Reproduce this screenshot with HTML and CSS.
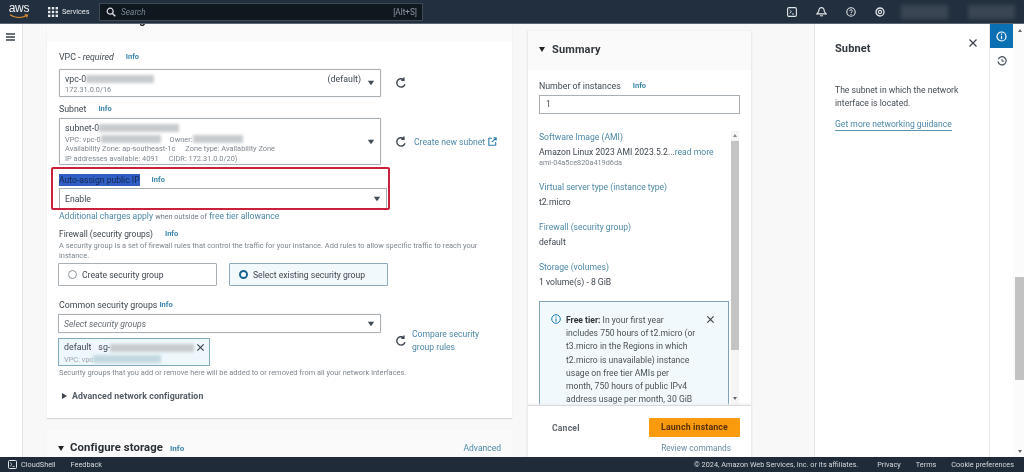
FILE: index.html
```html
<!DOCTYPE html>
<html lang="en">
<head>
<meta charset="utf-8">
<title>Launch an instance</title>
<link rel="stylesheet" href="styles.css">
</head>
<body>
<svg class="defs" width="0" height="0" aria-hidden="true">
  <symbol id="refresh" viewBox="0 0 12 12"><path d="M10 7.2A4.2 4.2 0 1 1 8.6 2.6M8.9 .6v2.6H6.3" fill="none" stroke="#3d4650" stroke-width="1.4"/></symbol>
  <symbol id="caret" viewBox="0 0 8 6"><path d="M.8 .8h6.4L4 5.2z" fill="#424c56"/></symbol>
  <symbol id="close" viewBox="0 0 10 10"><path d="M1.5 1.5l7 7M8.5 1.5l-7 7" fill="none" stroke="#3d4650" stroke-width="1.3"/></symbol>
</svg>
<div class="page">
  <header class="topbar">
    <div class="logo">
      <span class="logo-text">aws</span>
      <svg class="logo-smile" width="20" height="5" viewBox="0 0 20 5"><path d="M1 .8C6 4.4 13 4.4 18 1.2M15.6 .8l2.8 .1-.8 2.6" fill="none" stroke="#e8952c" stroke-width="1.1"/></svg>
    </div>
    <svg class="grid-icon" width="10" height="10" viewBox="0 0 10 10" fill="#e6e9ec"><rect width="2.4" height="2.4"/><rect x="3.8" width="2.4" height="2.4"/><rect x="7.6" width="2.4" height="2.4"/><rect y="3.8" width="2.4" height="2.4"/><rect x="3.8" y="3.8" width="2.4" height="2.4"/><rect x="7.6" y="3.8" width="2.4" height="2.4"/><rect y="7.6" width="2.4" height="2.4"/><rect x="3.8" y="7.6" width="2.4" height="2.4"/><rect x="7.6" y="7.6" width="2.4" height="2.4"/></svg>
    <span class="services">Services</span>
    <div class="searchbox">
      <svg width="10" height="10" viewBox="0 0 10 10"><circle cx="4.2" cy="4.2" r="3" fill="none" stroke="#dfe3e6" stroke-width="1.2"/><path d="M6.4 6.4L9.3 9.3" stroke="#dfe3e6" stroke-width="1.4"/></svg>
      <span class="search-ph">Search</span>
      <span class="search-key">[Alt+S]</span>
    </div>
    <div class="top-icons">
      <svg width="10" height="10" viewBox="0 0 10 10"><rect x=".6" y=".6" width="8.8" height="8.8" rx="1.4" fill="none" stroke="#e3e6e9" stroke-width="1.1"/><path d="M2.6 3l1.8 1.7-1.8 1.7M5 7h2" fill="none" stroke="#e3e6e9" stroke-width=".9"/></svg>
      <svg width="11" height="10" viewBox="0 0 11 10"><path d="M5.5 .6c-1.8 0-2.6 1.4-2.6 3 0 1.2-1 2-2 3.2h9.2c-1-1.2-2-2-2-3.2 0-1.6-.8-3-2.6-3z" fill="none" stroke="#e3e6e9" stroke-width="1.2"/><path d="M4 8.3h3v1H4z" fill="#e3e6e9"/></svg>
      <svg width="10" height="10" viewBox="0 0 10 10"><circle cx="5" cy="5" r="4.2" fill="none" stroke="#e3e6e9" stroke-width="1.1"/><path d="M3.7 3.9c0-1.6 2.7-1.6 2.7 0 0 1-1.4 1-1.4 2.1" fill="none" stroke="#e3e6e9" stroke-width=".9"/><circle cx="5" cy="7.4" r=".6" fill="#e3e6e9"/></svg>
      <svg width="10" height="10" viewBox="0 0 10 10"><circle cx="5" cy="5" r="4" fill="none" stroke="#e3e6e9" stroke-width="1.3"/><circle cx="5" cy="5" r="1.6" fill="none" stroke="#e3e6e9" stroke-width="1.1"/></svg>
    </div>
    <div class="account">
      <span class="acct-a"></span>
      <span class="acct-b"></span>
    </div>
  </header>

  <div class="workspace">
    <nav class="navrail">
      <svg width="9" height="8" viewBox="0 0 9 8"><path d="M0 1h9M0 4h9M0 7h9" stroke="#39434d" stroke-width="1.3"/></svg>
    </nav>

    <main class="form-col">
      <section class="card">
        <div class="card-head"><h2 class="clipped-title">Network settings</h2></div>
        <div class="card-body">
          <div class="label"><span>VPC - <i>required</i></span><a class="info info-vpc">Info</a></div>
          <div class="field-row field-vpc">
            <div class="select select-vpc">
              <div class="select-main">
                <div class="opt-line"><span>vpc-0</span><span class="smudge smudge-vpc"></span><span class="opt-tag">(default)</span></div>
                <div class="opt-sub">172.31.0.0/16</div>
              </div>
              <svg class="caret" width="8" height="6"><use href="#caret"/></svg>
            </div>
            <svg class="refresh" width="12" height="12"><use href="#refresh"/></svg>
          </div>

          <div class="label label-subnet"><span>Subnet</span><a class="info info-subnet">Info</a></div>
          <div class="field-row">
            <div class="select select-subnet">
              <div class="select-main">
                <div class="opt-line"><span>subnet-0</span><span class="smudge smudge-subnet"></span></div>
                <div class="opt-sub"><span>VPC: vpc-0</span><span class="smudge smudge-sv"></span><span class="owner">Owner:</span><span class="smudge smudge-owner"></span></div>
                <div class="opt-sub">Availability Zone: ap-southeast-1c<span class="gap-l">Zone type: Availability Zone</span></div>
                <div class="opt-sub">IP addresses available: 4091<span class="gap-l">CIDR: 172.31.0.0/20)</span></div>
              </div>
              <svg class="caret" width="8" height="6"><use href="#caret"/></svg>
            </div>
            <svg class="refresh" width="12" height="12"><use href="#refresh"/></svg>
            <a class="link create-link">Create new subnet</a>
            <svg class="ext" width="9" height="9" viewBox="0 0 9 9"><path d="M4 1.3H.8v6.9h6.9V5M3.8 5.2L8 1M5.4 .8h2.800v2.800" fill="none" stroke="#2f7fae" stroke-width="1.1"/></svg>
          </div>

          <div class="highlight">
            <div class="label label-auto"><span class="selected">Auto-assign public IP</span><a class="info info-auto">Info</a></div>
            <div class="select select-enable">
              <span>Enable</span>
              <svg class="caret" width="8" height="6"><use href="#caret"/></svg>
            </div>
          </div>

          <p class="charges"><a class="link">Additional charges apply</a> <small>when outside of</small> <a class="link">free tier allowance</a></p>

          <div class="label label-fw"><span>Firewall (security groups)</span><a class="info info-fw">Info</a></div>
          <p class="desc">A security group is a set of firewall rules that control the traffic for your instance. Add rules to allow specific traffic to reach your instance.</p>
          <div class="radios">
            <div class="radio-card"><span class="radio"></span>Create security group</div>
            <div class="radio-card radio-on"><span class="radio radio-dot"></span>Select existing security group</div>
          </div>

          <div class="label label-common"><span>Common security groups</span><a class="info info-common">Info</a></div>
          <div class="sg-row">
            <div class="sg-left">
              <div class="select select-sg"><i>Select security groups</i><svg class="caret" width="8" height="6"><use href="#caret"/></svg></div>
              <div class="token">
                <div class="token-main">
                  <div class="opt-line"><span>default</span><span class="token-id">sg-</span><span class="smudge smudge-sg"></span></div>
                  <div class="opt-sub token-sub"><span>VPC: vpc</span><span class="smudge smudge-tv"></span></div>
                </div>
                <svg class="token-x" width="9" height="9"><use href="#close"/></svg>
              </div>
            </div>
            <svg class="refresh" width="12" height="12"><use href="#refresh"/></svg>
            <a class="link compare-link">Compare security<br>group rules</a>
          </div>
          <p class="hint">Security groups that you add or remove here will be added to or removed from all your network interfaces.</p>
          <div class="advanced"><span class="tri-right"></span>Advanced network configuration</div>
        </div>
      </section>

      <section class="card card-storage">
        <h2 class="storage-title">Configure storage</h2>
        <a class="info info-storage">Info</a>
        <a class="link storage-adv">Advanced</a>
      </section>
    </main>

    <aside class="summary">
      <div class="summary-head"><span class="tri-down"></span><h2>Summary</h2></div>
      <div class="summary-top">
        <div class="label"><span>Number of instances</span><a class="info info-num">Info</a></div>
        <div class="num-input">1</div>
      </div>
      <div class="summary-scroll">
        <div class="summary-list">
          <a class="link sum-key">Software Image (AMI)</a>
          <div class="sum-val">Amazon Linux 2023 AMI 2023.5.2...<a class="link">read more</a></div>
          <div class="sum-sub">ami-04a5ce820a419d6da</div>
          <a class="link sum-key sum-gap">Virtual server type (instance type)</a>
          <div class="sum-val">t2.micro</div>
          <a class="link sum-key sum-gap">Firewall (security group)</a>
          <div class="sum-val">default</div>
          <a class="link sum-key sum-gap">Storage (volumes)</a>
          <div class="sum-val">1 volume(s) - 8 GiB</div>
          <div class="alert">
            <svg class="alert-icon" width="10" height="10" viewBox="0 0 10 10"><circle cx="5" cy="5" r="4.3" fill="none" stroke="#1c7eb0" stroke-width="1"/><path d="M5 4.4v3M5 2.4v1" stroke="#1c7eb0" stroke-width="1.1"/></svg>
            <p class="alert-text"><b>Free tier:</b> In your first year<br>includes 750 hours of t2.micro (or<br>t3.micro in the Regions in which<br>t2.micro is unavailable) instance<br>usage on free tier AMIs per<br>month, 750 hours of public IPv4<br>address usage per month, 30 GiB</p>
            <svg class="alert-x" width="9" height="9"><use href="#close"/></svg>
          </div>
        </div>
        <div class="mini-scroll"><span class="mini-up"></span><span class="mini-thumb"></span><span class="mini-down"></span></div>
      </div>
      <div class="summary-foot">
        <div class="foot-row"><a class="cancel">Cancel</a><a class="launch">Launch instance</a></div>
        <a class="link review">Review commands</a>
      </div>
    </aside>

    <aside class="help">
      <div class="help-head"><h2>Subnet</h2><svg width="10" height="10"><use href="#close"/></svg></div>
      <p class="help-text">The subnet in which the network interface is located.</p>
      <a class="help-link">Get more networking guidance</a>
    </aside>

    <div class="toolrail">
      <div class="tool-on"><svg width="11" height="11" viewBox="0 0 11 11"><circle cx="5.5" cy="5.5" r="4.5" fill="none" stroke="#fff" stroke-width="1.2"/><path d="M5.5 4.8v3.2M5.5 2.600v1.100" stroke="#fff" stroke-width="1.2"/></svg></div>
      <div class="tool-off"><svg width="10" height="10" viewBox="0 0 10 10"><path d="M1.2 3.4A4.1 4.1 0 1 1 1 5.4" fill="none" stroke="#4a545e" stroke-width="1.2"/><path d="M5 3v2.2h2.2" fill="none" stroke="#4a545e" stroke-width="1"/></svg></div>
    </div>

    <div class="pagescroll"><span class="ps-up"></span><span class="ps-thumb"></span><span class="ps-down"></span></div>
  </div>

  <footer class="footer">
    <svg width="9" height="9" viewBox="0 0 9 9"><rect x=".5" y=".5" width="8" height="8" rx="1" fill="none" stroke="#e3e6e9"/><path d="M2.2 2.6L4 4.4 2.2 6.2M4.500 6.500h2" fill="none" stroke="#e3e6e9" stroke-width=".8"/></svg>
    <span class="foot-cs">CloudShell</span>
    <span class="foot-fb">Feedback</span>
    <span class="foot-copy">© 2024, Amazon Web Services, Inc. or its affiliates.</span>
    <span class="foot-pr">Privacy</span>
    <span class="foot-te">Terms</span>
    <span class="foot-co">Cookie preferences</span>
  </footer>
</div>
</body>
</html>
```
FILE: styles.css
```css
* { box-sizing: border-box; }
html, body { margin: 0; padding: 0; }
body { width: 1024px; height: 472px; overflow: hidden; background: #fff; font-family: Roboto, "Liberation Sans", Arial, sans-serif; font-size: 8.6px; color: #3f4750; }
.defs { position: absolute; }
h2, p { margin: 0; }
.page { width: 1024px; height: 472px; display: flex; flex-direction: column; overflow: hidden; filter: blur(.35px); }

/* top bar */
.topbar { height: 24px; flex: none; display: flex; align-items: center; background: #222f3e; border-bottom: 1px solid #5a6673; color: #e6e9ec; }
.logo { width: 20px; margin-left: 9px; display: flex; flex-direction: column; align-items: center; height: 19px; }
.logo-text { font-family: "Liberation Sans", sans-serif; font-size: 12px; line-height: 12px; color: #f1f3f5; letter-spacing: -.2px; }
.grid-icon { margin-left: 19px; }
.services { margin-left: 4px; font-size: 7.3px; width: 37px; }
.searchbox { width: 324px; height: 18px; display: flex; align-items: center; background: #10181f; border: 1px solid #3f4a56; padding: 0 5px 0 6px; }
.search-ph { margin-left: 5px; font-style: italic; color: #7d8791; font-size: 8.3px; }
.search-key { margin-left: auto; color: #8d969f; font-size: 8.2px; }
.top-icons { margin-left: 364px; display: flex; gap: 19px; align-items: center; width: 99px; }
.account { margin-left: 15px; display: flex; gap: 20px; }
.acct-a, .acct-b { display: block; width: 47px; height: 14px; background: #3a4653; filter: blur(2px); }

/* main row */
.workspace { flex: 1; min-height: 0; display: flex; background: #f8f8f8; overflow: hidden; }
.navrail { width: 23px; flex: none; background: #fff; border-right: 1px solid #e4e4e4; padding: 9px 0 0 6px; }
.navrail svg { display: block; }
.form-col { width: 489px; flex: none; padding-left: 24px; }
.card { background: #fff; box-shadow: 0 1px 1px #d5d8da; }
.card-head { height: 18px; background: #fafafa; overflow: hidden; padding-left: 13px; }
.clipped-title { margin-top: -13px; font-size: 12px; line-height: 16px; font-weight: 700; color: #222; }
.card-body { padding: 9px 0 0 12px; height: 376px; }

.label { height: 12px; line-height: 12px; display: flex; font-size: 8.8px; color: #3f4750; }
.info { color: #3c86ab; font-weight: 700; font-size: 7.5px; }
.info-vpc { margin-left: 12px; }
.info-subnet { margin-left: 12px; }
.info-auto { margin-left: 12px; }
.info-fw { margin-left: 12px; }
.info-common { margin-left: 2px; }
.info-num { margin-left: 12px; }
.label-subnet { margin-top: 6px; }

.field-row { display: flex; align-items: center; margin-top: 3px; }
.field-vpc { margin-top: 6px; }
.refresh { flex: none; margin-left: 14px; }
.select { width: 322px; flex: none; background: #fff; border: 1px solid #a9b0b5; border-radius: 1px; padding-left: 5px; display: flex; align-items: center; box-shadow: 0 0 1px #c6cace; }
.select-main { flex: 1; min-width: 0; }
.select-vpc { height: 28px; }
.select-vpc .select-main { padding-top: 2px; }
.select-subnet { height: 47px; }
.select-subnet .select-main { padding-top: 3.6px; }
.caret { flex: none; margin: 0 5px 0 0; }
.opt-line { display: flex; align-items: center; height: 11px; line-height: 11px; font-size: 8.8px; }
.opt-tag { margin-left: auto; margin-right: 6px; }
.opt-sub { display: flex; height: 9.7px; line-height: 9.7px; font-size: 7.4px; color: #7f878f; }
.select-subnet .opt-line { margin-bottom: 1px; }
.gap-l { margin-left: 10px; }
.owner { margin-left: 9px; }
.smudge { display: block; height: 8px; background: #c8cbce; filter: blur(1.5px); }
.smudge-vpc { width: 68px; }
.smudge-subnet { width: 80px; }
.smudge-sv { width: 60px; }
.smudge-owner { width: 50px; }
.smudge-sg { width: 84px; }
.smudge-tv { width: 68px; background: #c2d8e0; }
.create-link { margin-left: 7px; white-space: nowrap; }
.ext { margin-left: 3px; flex: none; }
.link { color: #4d88a8; }

.highlight { width: 339px; height: 43px; margin: 2px 0 0 -8px; padding: 5px 0 0 6px; border: 2px solid #c9213b; border-radius: 2px; overflow: hidden; }
.label-auto { font-size: 8.6px; }
.selected { background: #2f5fc4; color: #14254e; }
.select-enable { width: 328px; height: 21px; margin-top: 2px; border-bottom: 0; box-shadow: none; }
.select-enable span { flex: 1; }

.charges { height: 12px; line-height: 12px; font-size: 8.6px; }
.charges small { font-size: 7.3px; color: #737b83; }
.label-fw { margin-top: 6px; font-size: 8.4px; }
.desc { width: 424px; margin-top: 1px; font-size: 7.45px; line-height: 10px; color: #7f878f; }
.radios { display: flex; gap: 12px; margin: 2px 0 0 -1px; }
.radio-card { width: 159px; height: 23px; display: flex; align-items: center; padding-left: 9px; gap: 5px; background: #fff; border: 1px solid #a9b0b5; border-radius: 1px; }
.radio-on { background: #f1f9fd; border-color: #8ea9b8; }
.radio { width: 9px; height: 9px; border-radius: 50%; border: 1px solid #8b9399; background: #fff; }
.radio-dot { border: 2.5px solid #17638f; }
.label-common { margin-top: 13px; }
.sg-row { display: flex; align-items: center; margin: 3px 0 0 -1px; }
.sg-row .refresh { margin-left: 14px; margin-top: 1px; }
.sg-left { width: 323px; flex: none; }
.select-sg { width: 323px; height: 19px; color: #646c74; justify-content: space-between; }
.token { width: 152px; height: 28px; margin-top: 5px; display: flex; align-items: flex-start; padding: 3px 4px 0 5px; background: #eef8fc; border: 1px solid #80a9bd; }
.token-main { flex: 1; min-width: 0; }
.token-id { margin-left: 7px; }
.token-sub { margin-top: 2px; color: #9aa4aa; }
.token-x { margin-top: 1px; flex: none; }
.compare-link { margin-left: 5px; line-height: 13px; margin-top: 1px; }
.hint { margin-top: 2px; height: 10px; line-height: 10px; font-size: 7.45px; color: #7f878f; white-space: nowrap; }
.advanced { margin: 12px 0 0 3px; height: 12px; line-height: 12px; display: flex; align-items: center; gap: 5px; font-size: 8.8px; font-weight: 700; color: #545c64; letter-spacing: .1px; }
.tri-right { width: 0; height: 0; border-left: 5px solid #3f4750; border-top: 3px solid transparent; border-bottom: 3px solid transparent; }
.card-storage { margin-top: 12px; height: 40px; background: #fafafa; box-shadow: none; display: flex; align-items: flex-start; padding: 10px 11px 0 11px; }
.card-storage::before { content: ""; width: 0; height: 0; margin: 6px 6px 0 0; border-top: 5px solid #222; border-left: 3.5px solid transparent; border-right: 3.5px solid transparent; }
.storage-title { font-size: 11.3px; line-height: 16px; font-weight: 700; color: #2a2f35; letter-spacing: .1px; }
.info-storage { margin: 4px 0 0 7px; font-size: 8px; }
.storage-adv { margin-left: auto; margin-top: 3px; font-size: 8.5px; }

/* summary */
.summary { width: 225px; flex: none; margin: 7px 0 0 15px; background: #fff; border: 1px solid #ececec; border-width: 0 1px; box-shadow: 0 0 1px #ddd; display: flex; flex-direction: column; }
.summary-head { height: 39px; flex: none; background: #fafafa; display: flex; align-items: center; padding: 0 0 2px 11px; gap: 7px; }
.summary-head h2 { font-size: 11px; font-weight: 700; color: #32383e; letter-spacing: .15px; }
.tri-down { width: 0; height: 0; border-top: 5px solid #222; border-left: 3.5px solid transparent; border-right: 3.5px solid transparent; }
.summary-top { padding: 10px 11px 0 11px; height: 61px; flex: none; }
.num-input { height: 19px; margin-top: 3px; border: 1px solid #a9b0b5; padding-left: 6px; line-height: 17px; }
.summary-scroll { height: 274px; flex: none; display: flex; padding-left: 11px; overflow: hidden; }
.summary-list { width: 192px; flex: none; }
.sum-key { display: block; height: 12px; line-height: 12px; }
.sum-gap { margin-top: 13px; }
.sum-val { margin-top: 3px; height: 12px; line-height: 12px; }
.sum-sub { height: 10px; line-height: 10px; font-size: 7.3px; color: #7f878f; }
.alert { width: 190px; height: 130px; margin-top: 13px; padding: 12px 13px 0 11px; display: flex; align-items: flex-start; gap: 5px; background: #f2f9fd; border: 1px solid #7ea4ba; }
.alert-icon { flex: none; }
.alert-text { flex: 1; font-size: 8.6px; line-height: 13.2px; color: #4a5159; white-space: nowrap; }
.alert-text b { color: #30363c; }
.alert-x { flex: none; margin-top: 1px; }
.mini-scroll { width: 8px; flex: none; display: flex; flex-direction: column; align-items: center; background: #f5f5f5; }
.mini-up { margin-top: 3px; border-bottom: 3px solid #888; border-left: 2px solid transparent; border-right: 2px solid transparent; }
.mini-thumb { width: 8px; height: 209px; margin-top: 4px; background: #c4c4c4; }
.mini-down { margin-top: auto; margin-bottom: 5px; border-top: 3px solid #666; border-left: 2px solid transparent; border-right: 2px solid transparent; }
.summary-foot { flex: 1; border-top: 1px solid #d8dbdd; padding: 12px 11px 0 24px; box-shadow: 0 -1px 2px #eee; background: #fff; z-index: 1; }
.foot-row { display: flex; align-items: center; justify-content: space-between; }
.cancel { font-weight: 700; font-size: 8.6px; color: #5f666d; letter-spacing: .2px; }
.launch { width: 91px; height: 19px; line-height: 19px; text-align: center; background: #f99b0c; border-radius: 1px; font-weight: 700; font-size: 8.8px; color: #5a2f06; letter-spacing: .15px; }
.review { display: block; text-align: right; margin: 5px 9px 0 0; font-size: 8.3px; line-height: 12px; color: #6a8ea2; }

/* help panel */
.help { width: 175px; flex: none; margin-left: 62px; background: #fff; border-left: 1px solid #e6e6e6; padding: 0 0 0 20px; }
.help-head { height: 48px; display: flex; align-items: flex-start; padding: 17px 11px 0 0; justify-content: space-between; }
.help-head h2 { font-size: 11px; line-height: 16px; font-weight: 700; color: #30363c; letter-spacing: .1px; }
.help-head svg { margin-top: -3px; }
.help-text { margin-top: 12px; width: 130px; line-height: 13.3px; color: #444c54; }
.help-link { display: inline-block; margin-top: 7px; line-height: 12px; color: #4d88a8; border-bottom: 1px solid #5b93b2; }
.toolrail { width: 24px; flex: none; background: #fff; border-left: 1px solid #e6e6e6; display: flex; flex-direction: column; align-items: center; }
.tool-on { width: 24px; height: 24px; display: flex; align-items: center; justify-content: center; background: #0a6fb3; }
.tool-off { height: 24px; display: flex; align-items: center; justify-content: center; margin-top: 1px; }
.pagescroll { flex: 1; background: #fbfbfb; display: flex; flex-direction: column; align-items: flex-end; }
.ps-up { margin: 5px 2px 0 0; border-bottom: 3px solid #666; border-left: 2.5px solid transparent; border-right: 2.5px solid transparent; }
.ps-thumb { width: 9px; height: 103px; margin-top: 245px; background: #c2c2c2; }
.ps-down { margin: auto 2px 4px 0; border-top: 3px solid #666; border-left: 2.5px solid transparent; border-right: 2.5px solid transparent; }

/* footer */
.footer { height: 15px; flex: none; display: flex; align-items: center; padding-left: 8px; background: #1f2b39; color: #d5d9dd; font-size: 7.3px; white-space: nowrap; }
.foot-cs { margin-left: 4px; }
.foot-fb { margin-left: 15px; }
.foot-copy { margin-left: auto; }
.foot-pr { margin-left: 19px; }
.foot-te { margin-left: 15px; }
.foot-co { margin: 0 10px 0 15px; }
```
